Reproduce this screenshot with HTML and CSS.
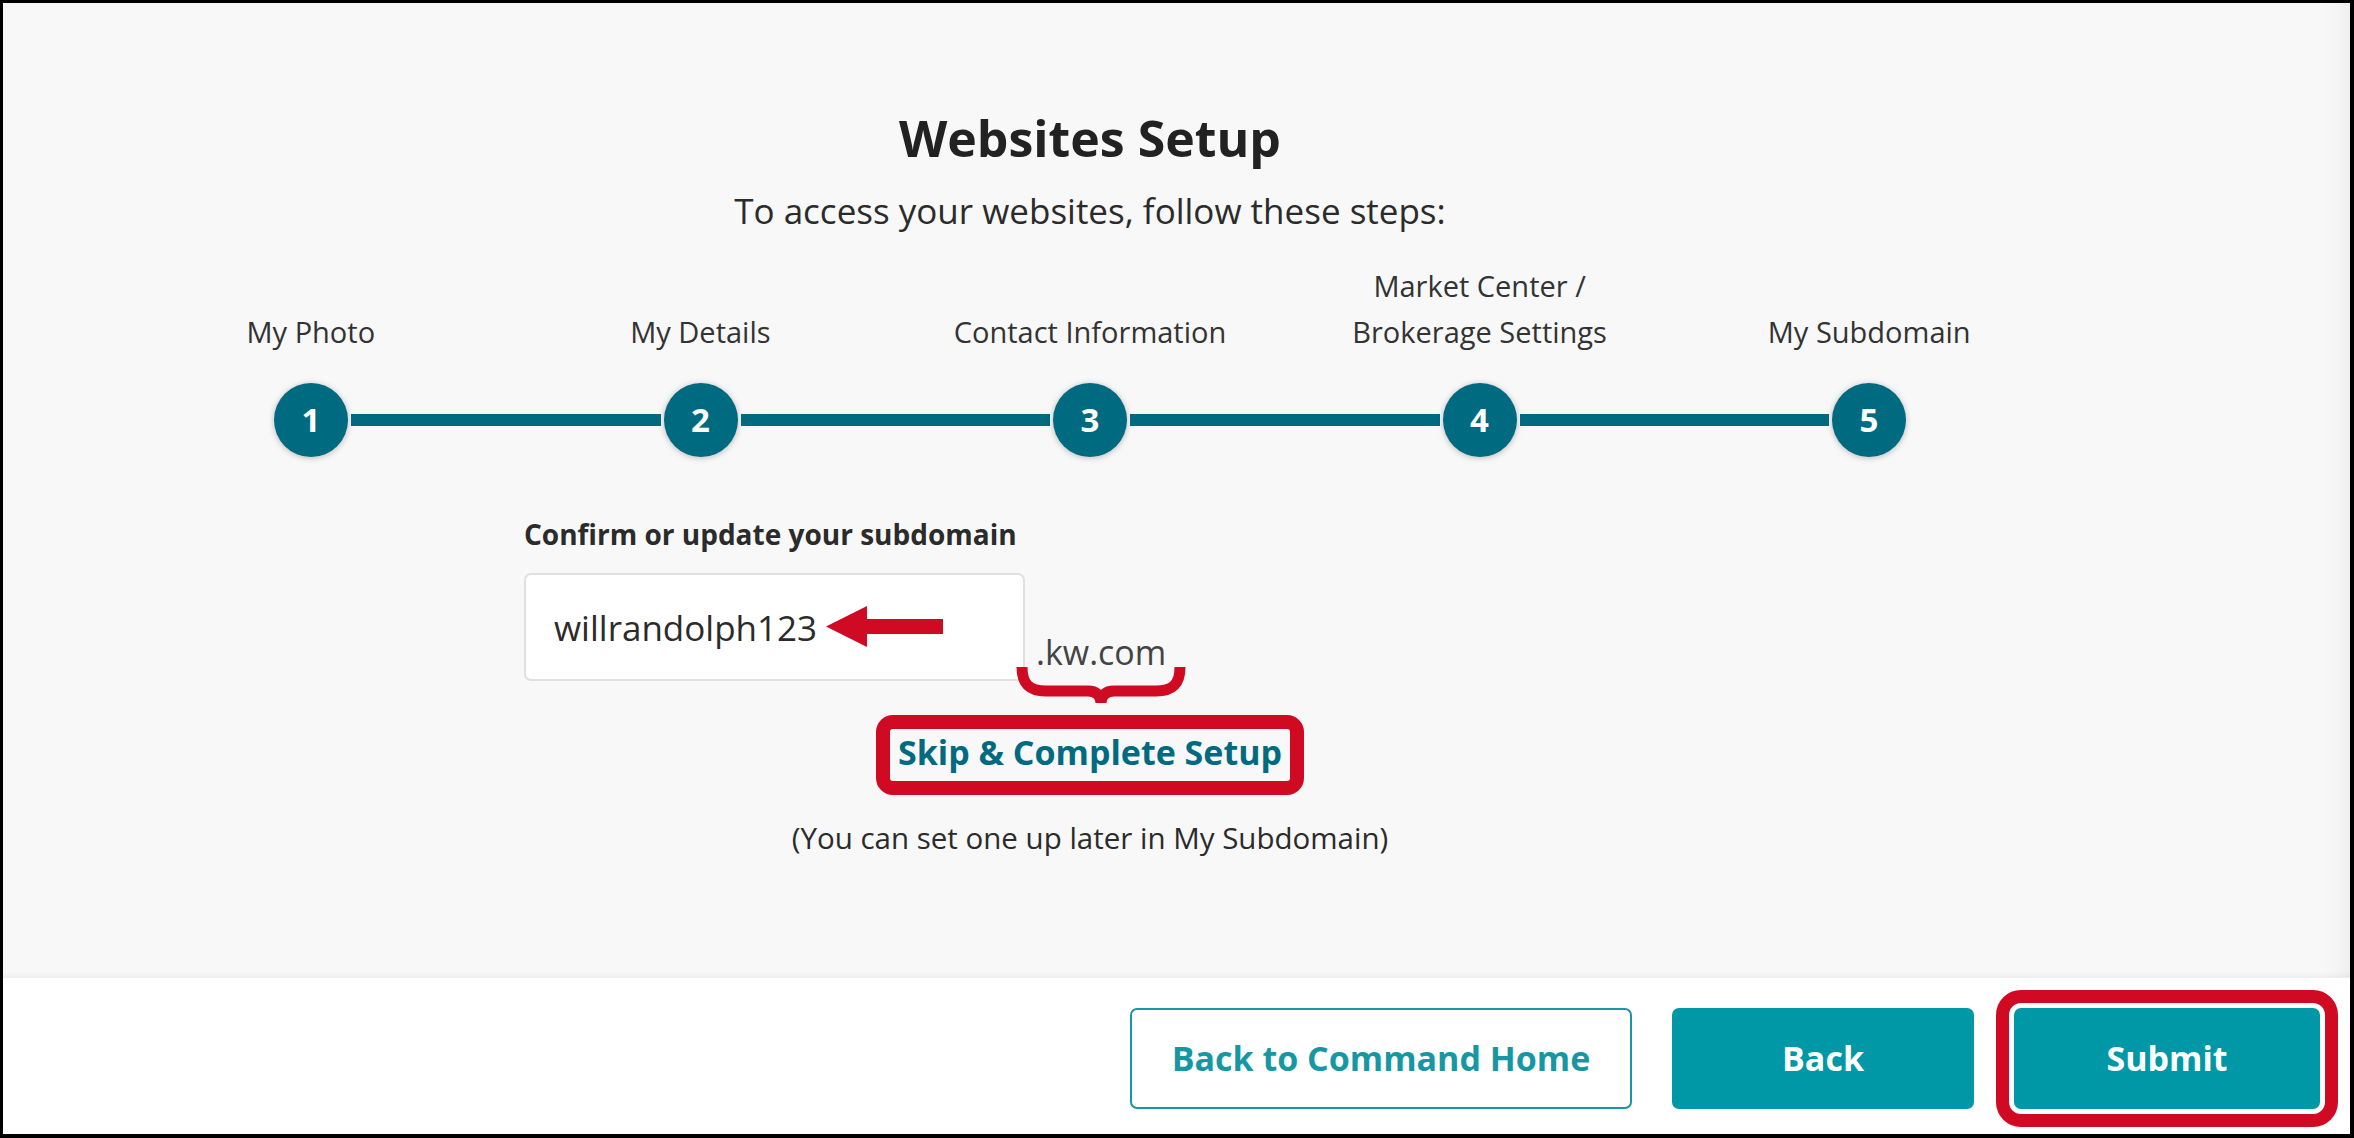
FILE: index.html
```html
<!DOCTYPE html>
<html lang="en">
<head>
    <meta charset="UTF-8">
    <meta name="viewport" content="width=device-width, initial-scale=1.0">
    <title>Websites Setup</title>
    <link rel="stylesheet" href="styles.css">
</head>
<body>
    <div class="frame">
        <main class="setup">
            <h1 class="setup-title">Websites Setup</h1>
            <p class="setup-intro">To access your websites, follow these steps:</p>

            <ol class="step-labels">
                <li>My Photo</li>
                <li>My Details</li>
                <li>Contact Information</li>
                <li>Market Center /<br>Brokerage Settings</li>
                <li>My Subdomain</li>
            </ol>
            <div class="step-track">
                <span class="step-dot">1</span>
                <span class="step-line"></span>
                <span class="step-dot">2</span>
                <span class="step-line"></span>
                <span class="step-dot">3</span>
                <span class="step-line"></span>
                <span class="step-dot">4</span>
                <span class="step-line"></span>
                <span class="step-dot">5</span>
            </div>

            <div class="subdomain">
                <label class="subdomain-label" for="subdomain">Confirm or update your subdomain</label>
                <div class="subdomain-row">
                    <div class="subdomain-field">
                        <input id="subdomain" class="subdomain-input" type="text" value="willrandolph123">
                        <!-- annotation arrow -->
                        <svg class="note-arrow" width="117" height="41" viewBox="0 0 117 41">
                            <polygon points="0,20.5 41,0 41,41"/>
                            <rect x="40" y="13" width="77" height="15"/>
                        </svg>
                    </div>
                    <span class="subdomain-suffix">.kw.com
                        <svg class="note-brace" width="170" height="36" viewBox="0 0 170 36">
                            <path d="M6,0 C6,17 13,24 30,24 H72 C80,24 85,28 85,36 C85,28 90,24 98,24 H140 C157,24 164,17 164,0"/>
                        </svg>
                    </span>
                </div>
            </div>

            <div class="skip">
                <a class="skip-link note-box" href="#">Skip &amp; Complete Setup</a>
            </div>
            <p class="skip-hint">(You can set one up later in My Subdomain)</p>
        </main>

        <footer class="actions">
            <button class="btn btn-outline btn-home">Back to Command Home</button>
            <button class="btn btn-solid btn-back">Back</button>
            <button class="btn btn-solid btn-submit note-box">Submit</button>
        </footer>
    </div>
</body>
</html>
```

FILE: styles.css
```css
* {
    box-sizing: border-box;
}

body {
    margin: 0;
    font-family: 'Open Sans', 'Noto Sans', sans-serif;
    color: #262626;
    background-color: #fff;
}

.frame {
    width: 2354px;
    height: 1138px;
    display: flex;
    flex-direction: column;
    border-style: solid;
    border-color: #000;
    border-width: 3px 4px 4px 3px;
}

/* top area */
.setup {
    flex: 1;
    padding: 105px 173px 0 0;
    background-color: #f8f8f8;
    text-align: center;
    box-shadow: inset -34px 0 30px -30px rgba(0, 0, 0, 0.06), inset 0 -5px 5px -4px rgba(0, 0, 0, 0.06);
}

.setup-title {
    margin: 0;
    font-size: 50px;
    line-height: 60px;
    font-weight: 700;
    color: #222;
}

.setup-intro {
    margin: 21px 0 0;
    font-size: 35px;
    line-height: 44px;
    color: #2b2b2b;
}

/* stepper */
.step-labels {
    list-style: none;
    margin: 30px auto 0;
    padding: 0;
    width: 1948px;
    height: 92px;
    display: grid;
    grid-template-columns: repeat(5, 1fr);
    align-items: end;
}

.step-labels li {
    font-size: 29px;
    line-height: 46px;
    color: #333;
}

.step-track {
    width: 1632px;
    margin: 28px auto 0;
    display: flex;
    align-items: center;
}

.step-dot {
    flex: none;
    width: 74px;
    height: 74px;
    border-radius: 50%;
    background-color: #006a80;
    color: #fff;
    font-size: 33px;
    font-weight: 700;
    line-height: 74px;
    box-shadow: 0 1px 6px rgba(0, 0, 0, 0.25);
}

.step-line {
    flex: 1;
    height: 12px;
    margin: 0 3px;
    background-color: #006a80;
}

/* subdomain form */
.subdomain {
    width: 1132px;
    margin: 59px auto 0;
    text-align: left;
}

.subdomain-label {
    display: block;
    font-size: 28px;
    line-height: 36px;
    font-weight: 700;
    color: #2b2b2b;
}

.subdomain-row {
    display: flex;
    align-items: flex-end;
    margin-top: 21px;
}

.subdomain-field {
    position: relative;
}

.subdomain-input {
    width: 501px;
    height: 108px;
    padding: 0 28px;
    border: 2px solid #e0e0e0;
    border-radius: 7px;
    background-color: #fff;
    font-family: inherit;
    font-size: 35px;
    color: #2b2b2b;
    outline: none;
}

.subdomain-suffix {
    position: relative;
    margin: 0 0 9px 11px;
    font-size: 34px;
    line-height: 40px;
    color: #444;
}

/* red annotations */
.note-arrow {
    position: absolute;
    left: 302px;
    top: 33px;
    fill: #cf0a22;
}

.note-brace {
    position: absolute;
    left: -20px;
    top: 35px;
    fill: none;
    stroke: #cf0a22;
    stroke-width: 11;
}

.note-box {
    outline: 14px solid #cf0a22;
}

/* skip */
.skip {
    margin-top: 48px;
}

.skip-link {
    display: inline-block;
    padding: 0 8px 6px;
    line-height: 46px;
    font-size: 34px;
    font-weight: 700;
    color: #006a80;
    text-decoration: none;
    border-radius: 3px;
}

.skip-hint {
    margin: 39px 0 0;
    font-size: 29.5px;
    line-height: 36px;
    color: #2b2b2b;
}

/* footer buttons */
.actions {
    height: 157px;
    flex: none;
    display: flex;
    justify-content: flex-end;
    align-items: center;
    gap: 40px;
    padding: 4px 30px 0 0;
    background-color: #fff;
    border-top: 1px solid #eee;
}

.btn {
    height: 101px;
    border-radius: 7px;
    font-family: inherit;
    font-size: 34px;
    font-weight: 700;
    cursor: pointer;
}

.btn-outline {
    background-color: #fff;
    color: #1697a4;
    border: 2px solid #1697a4;
}

.btn-solid {
    background-color: #0098a6;
    color: #fff;
    border: none;
}

.btn-home {
    width: 502px;
}

.btn-back {
    width: 302px;
}

.btn-submit {
    width: 306px;
    outline-width: 13px;
    outline-offset: 5px;
}
```
